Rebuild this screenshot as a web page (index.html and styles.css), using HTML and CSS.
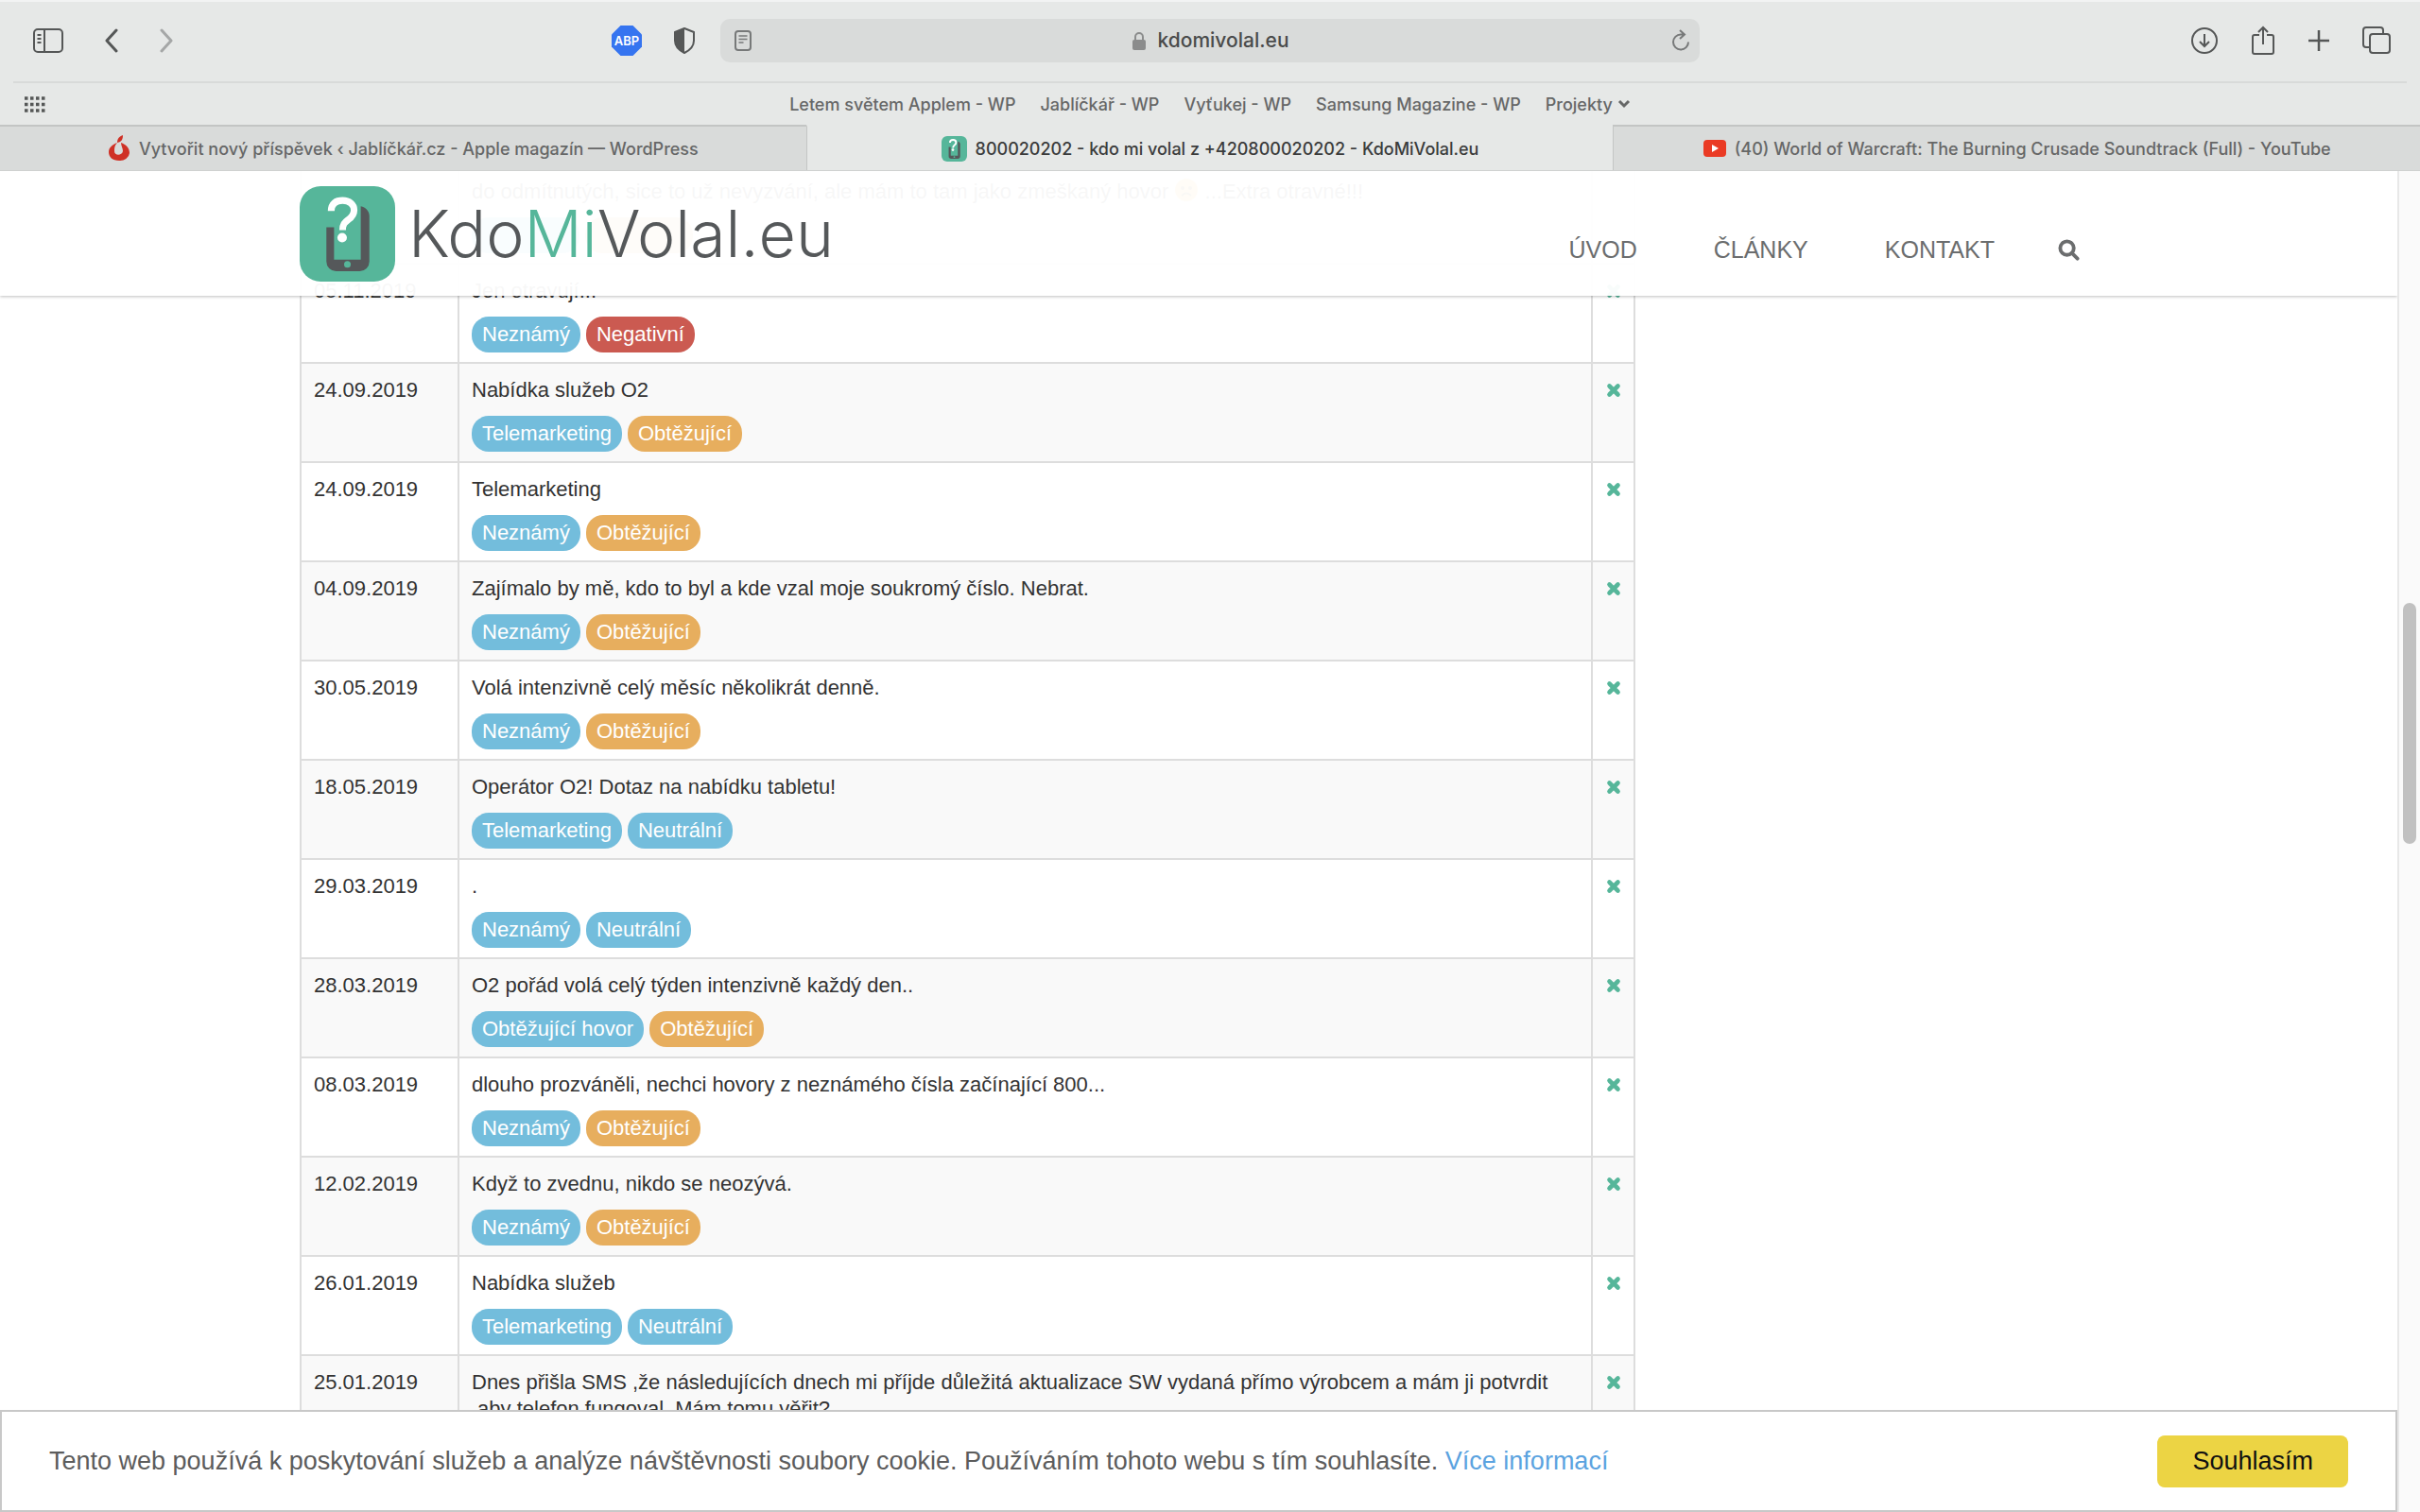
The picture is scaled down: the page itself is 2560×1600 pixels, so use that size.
FILE: index.html
```html
<!DOCTYPE html>
<html lang="cs">
<head>
  <meta charset="UTF-8">
  <meta name="viewport" content="width=device-width, initial-scale=1.0">
  <title>800020202 - kdo mi volal z +420800020202 - KdoMiVolal.eu</title>
  <link rel="stylesheet" href="styles.css">
</head>
<body>
  <svg class="defs" aria-hidden="true">
    <symbol id="remove" viewBox="0 0 16 16">
      <path d="M3.5 3.5l9 9M12.5 3.5l-9 9" fill="none" stroke="currentColor" stroke-width="4.6" stroke-linecap="round"/>
    </symbol>
    <symbol id="phone" viewBox="0 0 100 100">
      <rect width="100" height="100" rx="22" fill="#56b69a"/>
      <path d="M28 43h8v34h28V21c5 1 9 5 9 10v48a10 10 0 0 1-10 10H38a10 10 0 0 1-10-10z" fill="#55585a"/>
      <circle cx="50" cy="82" r="3.5" fill="#56b69a"/>
      <path d="M33 26c0-8 5-11 12-11s12 4 12 10c0 5-3 8-6 10-4 3-6 5-6 11" fill="none" stroke="#fff" stroke-width="7"/>
      <circle cx="44.500" cy="54" r="5" fill="#fff"/>
    </symbol>
  </svg>

  <div class="browser">
    <div class="toolbar">
      <div class="tools">
        <button type="button" class="tool" aria-label="Boční panel">
          <svg width="34" height="26" viewBox="0 0 34 26" fill="none" stroke="currentColor" stroke-width="2">
            <rect x="2" y="1" width="30" height="24" rx="4"/>
            <path d="M13 1v24M5.500 7h4M5.500 11h4M5.500 15h4"/>
          </svg>
        </button>
        <button type="button" class="tool back" aria-label="Zpět">
          <svg width="16" height="26" viewBox="0 0 16 26" fill="none" stroke="currentColor" stroke-width="3" stroke-linecap="round" stroke-linejoin="round"><path d="M13 2L3 13l10 11"/></svg>
        </button>
        <button type="button" class="tool forward" aria-label="Vpřed">
          <svg width="16" height="26" viewBox="0 0 16 26" fill="none" stroke="currentColor" stroke-width="3" stroke-linecap="round" stroke-linejoin="round"><path d="M3 2l10 11L3 24"/></svg>
        </button>
        <button type="button" class="tool abp" aria-label="Adblock Plus">
          <svg width="32" height="32" viewBox="0 0 32 32">
            <path d="M9.500 0h13L32 9.500v13L22.500 32h-13L0 22.500v-13z" fill="#3574f0"/>
            <text x="16" y="21" text-anchor="middle" class="abp-text">ABP</text>
          </svg>
        </button>
        <button type="button" class="tool shield" aria-label="Přehled soukromí">
          <svg width="26" height="30" viewBox="0 0 26 30">
            <path d="M13 2l10 4v9c0 6-4 10-10 13C7 25 3 21 3 15V6z" fill="none" stroke="currentColor" stroke-width="2" stroke-linejoin="round"/>
            <path d="M13 2v26C7 25 3 21 3 15V6z" fill="currentColor"/>
          </svg>
        </button>
      </div>

      <div class="address">
        <button type="button" class="tool small" aria-label="Čtečka">
          <svg width="18" height="22" viewBox="0 0 18 22" fill="none" stroke="currentColor" stroke-width="2">
            <rect x="1" y="1" width="16" height="20" rx="3"/>
            <path d="M4.500 6h9M4.500 9.500h9M4.500 13h5" stroke-width="1.500"/>
          </svg>
        </button>
        <div class="url">
          <svg width="14" height="20" viewBox="0 0 14 20" fill="none">
            <rect x="0" y="9" width="14" height="11" rx="2" fill="#8b8c8c"/>
            <path d="M3 10V6a4 4 0 0 1 8 0v4" stroke="#8b8c8c" stroke-width="2"/>
          </svg>
          <input type="text" class="url-input" aria-label="Adresa" value="kdomivolal.eu">
        </div>
        <button type="button" class="tool small" aria-label="Načíst znovu">
          <svg width="20" height="24" viewBox="0 0 20 24" fill="none" stroke="currentColor" stroke-width="2">
            <path d="M13 5.500H10a8 8 0 1 0 8 8M9 1l5 4.500L9 10"/>
          </svg>
        </button>
      </div>

      <div class="tools right">
        <button type="button" class="tool" aria-label="Stažené">
          <svg width="30" height="30" viewBox="0 0 30 30" fill="none" stroke="currentColor" stroke-width="2"><circle cx="15" cy="15" r="13"/><path d="M15 8v13M10 16l5 5 5-5"/></svg>
        </button>
        <button type="button" class="tool" aria-label="Sdílet">
          <svg width="26" height="32" viewBox="0 0 26 32" fill="none" stroke="currentColor" stroke-width="2"><path d="M9 10H4a2 2 0 0 0-2 2v16a2 2 0 0 0 2 2h18a2 2 0 0 0 2-2V12a2 2 0 0 0-2-2h-5M13 20V2M8 7l5-5 5 5"/></svg>
        </button>
        <button type="button" class="tool" aria-label="Nový panel">
          <svg width="24" height="24" viewBox="0 0 24 24" fill="none" stroke="currentColor" stroke-width="2.500"><path d="M12 1v22M1 12h22"/></svg>
        </button>
        <button type="button" class="tool" aria-label="Přehled panelů">
          <svg width="30" height="30" viewBox="0 0 30 30" fill="none" stroke="currentColor" stroke-width="2"><rect x="8" y="8" width="21" height="20" rx="3"/><path d="M8 22H4a3 3 0 0 1-3-3V4a3 3 0 0 1 3-3h15a3 3 0 0 1 3 3v4"/></svg>
        </button>
      </div>
    </div>

    <div class="bookmarks">
      <button type="button" class="tool grid" aria-label="Oblíbené">
        <svg width="22" height="17" viewBox="0 0 22 17" stroke="currentColor" stroke-width="3.500" stroke-dasharray="3.500 2.500"><path d="M0 2h22M0 8.500h22M0 15h22"/></svg>
      </button>
      <a href="#">Letem světem Applem - WP</a>
      <a href="#">Jablíčkář - WP</a>
      <a href="#">Vyťukej - WP</a>
      <a href="#">Samsung Magazine - WP</a>
      <button type="button" class="folder">Projekty
        <svg width="14" height="10" viewBox="0 0 14 10" fill="none" stroke="currentColor" stroke-width="3"><path d="M2 2l5 5 5-5"/></svg>
      </button>
    </div>

    <div class="tabs">
      <a href="#" class="tab">
        <svg width="24" height="28" viewBox="0 0 24 28"><path d="M14 8c5 2 9 5 9 11a10 9 0 0 1-11 8C5 27 1 23 1 18c0-5 4-8 9-10-3 3-3 6-3 9 0 5 8 5 9 0 0-3-2-6-2-9z" fill="#cf3126"/><path d="M10 8c0-5 3-7 6-8 0 4-1 7-6 8z" fill="#cf3126"/></svg>
        Vytvořit nový příspěvek ‹ Jablíčkář.cz - Apple magazín — WordPress
      </a>
      <a href="#" class="tab active">
        <svg width="27" height="27"><use href="#phone"/></svg>
        800020202 - kdo mi volal z +420800020202 - KdoMiVolal.eu
      </a>
      <a href="#" class="tab">
        <svg width="24" height="18" viewBox="0 0 24 18"><rect width="24" height="18" rx="4" fill="#ea3b24"/><path d="M9 5l7 4-7 4z" fill="#fff"/></svg>
        (40) World of Warcraft: The Burning Crusade Soundtrack (Full) - YouTube
      </a>
    </div>
  </div>

  <div class="viewport">
    <div class="page">
      <header class="site-header">
        <div class="container header-row">
          <a href="#" class="logo">
            <svg width="101" height="101"><use href="#phone"/></svg>
            <span>Kdo<span class="green">Mi</span>Volal.eu</span>
          </a>
          <nav class="menu">
            <a href="#">ÚVOD</a>
            <a href="#">ČLÁNKY</a>
            <a href="#">KONTAKT</a>
            <button type="button" class="search" aria-label="Hledat">
              <svg width="23" height="23" viewBox="0 0 24 24" fill="none" stroke="currentColor" stroke-width="4"><circle cx="10" cy="10" r="7.500"/><path d="M15.500 15.500l6 6" stroke-linecap="round"/></svg>
            </button>
          </nav>
        </div>
      </header>

      <main class="container">
        <table class="comments">
          <tbody>
            <tr>
              <td class="date"></td>
              <td>do odmítnutých, sice to už nevyzvání, ale mám to tam jako zmeškaný hovor <svg class="emoji" width="26" height="26" viewBox="0 0 26 26"><circle cx="13" cy="13" r="12" fill="#f5b942"/><circle cx="9" cy="11" r="2" fill="#6b4a14"/><circle cx="17" cy="11" r="2" fill="#6b4a14"/><path d="M8 19q5-5 10 0" fill="none" stroke="#6b4a14" stroke-width="2"/></svg> ...Extra otravné!!!
                <div class="labels"><span class="label info empty"></span><span class="label warning empty"></span></div>
              </td>
              <td class="remove"></td>
            </tr>
            <tr>
              <td class="date">05.11.2019</td>
              <td>Jen otravují...
                <div class="labels"><span class="label info">Neznámý</span><span class="label danger">Negativní</span></div>
              </td>
              <td class="remove"><button type="button" aria-label="Nahlásit"><svg width="16" height="16"><use href="#remove"/></svg></button></td>
            </tr>
            <tr>
              <td class="date">24.09.2019</td>
              <td>Nabídka služeb O2
                <div class="labels"><span class="label info">Telemarketing</span><span class="label warning">Obtěžující</span></div>
              </td>
              <td class="remove"><button type="button" aria-label="Nahlásit"><svg width="16" height="16"><use href="#remove"/></svg></button></td>
            </tr>
            <tr>
              <td class="date">24.09.2019</td>
              <td>Telemarketing
                <div class="labels"><span class="label info">Neznámý</span><span class="label warning">Obtěžující</span></div>
              </td>
              <td class="remove"><button type="button" aria-label="Nahlásit"><svg width="16" height="16"><use href="#remove"/></svg></button></td>
            </tr>
            <tr>
              <td class="date">04.09.2019</td>
              <td>Zajímalo by mě, kdo to byl a kde vzal moje soukromý číslo. Nebrat.
                <div class="labels"><span class="label info">Neznámý</span><span class="label warning">Obtěžující</span></div>
              </td>
              <td class="remove"><button type="button" aria-label="Nahlásit"><svg width="16" height="16"><use href="#remove"/></svg></button></td>
            </tr>
            <tr>
              <td class="date">30.05.2019</td>
              <td>Volá intenzivně celý měsíc několikrát denně.
                <div class="labels"><span class="label info">Neznámý</span><span class="label warning">Obtěžující</span></div>
              </td>
              <td class="remove"><button type="button" aria-label="Nahlásit"><svg width="16" height="16"><use href="#remove"/></svg></button></td>
            </tr>
            <tr>
              <td class="date">18.05.2019</td>
              <td>Operátor O2! Dotaz na nabídku tabletu!
                <div class="labels"><span class="label info">Telemarketing</span><span class="label info">Neutrální</span></div>
              </td>
              <td class="remove"><button type="button" aria-label="Nahlásit"><svg width="16" height="16"><use href="#remove"/></svg></button></td>
            </tr>
            <tr>
              <td class="date">29.03.2019</td>
              <td>.
                <div class="labels"><span class="label info">Neznámý</span><span class="label info">Neutrální</span></div>
              </td>
              <td class="remove"><button type="button" aria-label="Nahlásit"><svg width="16" height="16"><use href="#remove"/></svg></button></td>
            </tr>
            <tr>
              <td class="date">28.03.2019</td>
              <td>O2 pořád volá celý týden intenzivně každý den..
                <div class="labels"><span class="label info">Obtěžující hovor</span><span class="label warning">Obtěžující</span></div>
              </td>
              <td class="remove"><button type="button" aria-label="Nahlásit"><svg width="16" height="16"><use href="#remove"/></svg></button></td>
            </tr>
            <tr>
              <td class="date">08.03.2019</td>
              <td>dlouho prozváněli, nechci hovory z neznámého čísla začínající 800...
                <div class="labels"><span class="label info">Neznámý</span><span class="label warning">Obtěžující</span></div>
              </td>
              <td class="remove"><button type="button" aria-label="Nahlásit"><svg width="16" height="16"><use href="#remove"/></svg></button></td>
            </tr>
            <tr>
              <td class="date">12.02.2019</td>
              <td>Když to zvednu, nikdo se neozývá.
                <div class="labels"><span class="label info">Neznámý</span><span class="label warning">Obtěžující</span></div>
              </td>
              <td class="remove"><button type="button" aria-label="Nahlásit"><svg width="16" height="16"><use href="#remove"/></svg></button></td>
            </tr>
            <tr>
              <td class="date">26.01.2019</td>
              <td>Nabídka služeb
                <div class="labels"><span class="label info">Telemarketing</span><span class="label info">Neutrální</span></div>
              </td>
              <td class="remove"><button type="button" aria-label="Nahlásit"><svg width="16" height="16"><use href="#remove"/></svg></button></td>
            </tr>
            <tr>
              <td class="date">25.01.2019</td>
              <td>Dnes přišla SMS ,že následujících dnech mi příjde důležitá aktualizace SW vydaná přímo výrobcem a mám ji potvrdit<br>&nbsp;aby telefon fungoval. Mám tomu věřit?</td>
              <td class="remove"><button type="button" aria-label="Nahlásit"><svg width="16" height="16"><use href="#remove"/></svg></button></td>
            </tr>
          </tbody>
        </table>
      </main>

      <div class="cookies">
        <p>Tento web používá k poskytování služeb a analýze návštěvnosti soubory cookie. Používáním tohoto webu s tím souhlasíte. <a href="#">Více informací</a></p>
        <button type="button">Souhlasím</button>
      </div>
    </div>
    <div class="scrollbar"><div class="thumb"></div></div>
  </div>
</body>
</html>
```

FILE: styles.css
```css
* {
  box-sizing: border-box;
}
body {
  margin: 0;
  height: 100vh;
  display: flex;
  flex-direction: column;
  overflow: hidden;
  background: #fff;
  font-family: "Liberation Sans", Arial, sans-serif;
}
a {
  color: inherit;
  text-decoration: none;
}
button {
  padding: 0;
  border: 0;
  background: none;
  color: inherit;
  font: inherit;
}
svg {
  display: block;
  flex: none;
}
.defs {
  position: absolute;
  width: 0;
  height: 0;
}

/* browser window */
.browser {
  flex: none;
  background: #e6e8e7;
  border-top: 2px solid #f2f3f3;
  font-family: Inter, sans-serif;
  font-size: 18px;
  font-weight: 500;
  color: #666767;
}
.toolbar {
  display: grid;
  grid-template-columns: 1fr 40.5% 1fr;
  align-items: center;
  height: 84px;
  padding-bottom: 3px;
}
.tools {
  display: flex;
  align-items: center;
  padding-left: 34px;
}
.tool {
  color: #555757;
}
.back {
  margin-left: 42px;
}
.forward {
  margin-left: 42px;
  color: #a5a7a7;
}
.abp {
  margin-left: auto;
}
.abp-text {
  font-size: 13px;
  font-weight: 600;
  fill: #fff;
}
.shield {
  margin: 0 25px 0 32px;
}
.right {
  justify-content: flex-end;
  gap: 34px;
  padding: 0 31px 0 0;
}
.address {
  display: flex;
  align-items: center;
  height: 46px;
  padding: 0 10px 0 15px;
  border-radius: 10px;
  background: #d9dbda;
}
.small {
  color: #777979;
}
.url {
  flex: 1;
  display: flex;
  align-items: center;
  justify-content: center;
  gap: 12px;
}
.url-input {
  width: 140px;
  padding: 0;
  border: 0;
  background: none;
  font: inherit;
  font-size: 21px;
  color: #4a4b4b;
}
.bookmarks {
  position: relative;
  display: flex;
  align-items: center;
  justify-content: center;
  gap: 26px;
  height: 46px;
  margin: 0 14px;
  border-top: 2px solid #d8dad9;
}
.grid {
  position: absolute;
  left: 12px;
}
.folder {
  display: flex;
  align-items: center;
  gap: 5px;
}
.tabs {
  display: flex;
  height: 49px;
  border-bottom: 1px solid #cfd1d0;
}
.tab {
  flex: 1;
  display: flex;
  align-items: center;
  justify-content: center;
  gap: 9px;
  background: #d9dbda;
  border-top: 2px solid #c3c5c4;
}
.tab + .tab {
  border-left: 1px solid #c3c5c4;
}
.tab.active {
  background: #e6e8e7;
  border-top-color: #e6e8e7;
  color: #3b3c3c;
}

/* web page */
.viewport {
  flex: 1;
  min-height: 0;
  display: flex;
}
.page {
  position: relative;
  flex: 1;
  overflow: hidden;
}
.container {
  width: 75%;
  margin: 0 auto;
}
.site-header {
  position: absolute;
  top: 0;
  left: 0;
  right: 0;
  height: 132px;
  background: rgba(255, 255, 255, 0.96);
  box-shadow: 0 1px 3px rgba(0, 0, 0, 0.25);
}
.header-row {
  display: flex;
  align-items: center;
  justify-content: space-between;
  height: 132px;
}
.logo {
  display: flex;
  align-items: center;
  gap: 14px;
  font-family: Inter, sans-serif;
  font-size: 68px;
  font-weight: 300;
  color: #55585a;
}
.green {
  color: #56b69a;
}
.menu {
  display: flex;
  align-items: center;
  gap: 81px;
  padding: 34px 19px 0 0;
  font-size: 25px;
  color: #6b6d6e;
}
.search {
  margin-left: -14px;
}
.comments {
  width: 1413px;
  max-width: 100%;
  margin-top: -9px;
  border-collapse: collapse;
  font-size: 22px;
  line-height: 28px;
  color: #333;
}
.comments td {
  padding: 14px 13px 10px;
  border: 2px solid #ddd;
  vertical-align: top;
}
.comments tr:nth-child(odd) {
  background: #f9f9f9;
}
.comments .date {
  width: 167px;
}
.comments .remove {
  width: 45px;
  color: #56b69a;
}
.remove button {
  display: block;
  margin: 6px auto;
}
.emoji {
  display: inline-block;
  vertical-align: -4px;
}
.labels {
  display: flex;
  gap: 6px;
  margin-top: 13px;
}
.label {
  padding: 0 11px;
  border-radius: 18px;
  line-height: 38px;
  color: #fff;
}
.info {
  background: #73bddc;
}
.warning {
  background: #e7ae5e;
}
.danger {
  background: #cb5a51;
}
.empty {
  width: 114px;
  height: 38px;
}
.cookies {
  position: absolute;
  left: 0;
  right: 0;
  bottom: 0;
  display: flex;
  align-items: center;
  justify-content: space-between;
  height: 108px;
  padding: 0 50px;
  border: 2px solid #c8c8c8;
  background: #fff;
  font-size: 27px;
  color: #5c5c5c;
}
.cookies p {
  margin: 0;
}
.cookies a {
  color: #5ba3e0;
}
.cookies button {
  padding: 0 37px;
  border-radius: 8px;
  background: #ecd444;
  line-height: 55px;
  color: #111;
}
.scrollbar {
  width: 24px;
  border-left: 2px solid #e8e8e8;
  background: #fafafa;
}
.thumb {
  width: 14px;
  height: 18%;
  margin: 457px auto 0;
  border-radius: 7px;
  background: #c1c1c1;
}
```
